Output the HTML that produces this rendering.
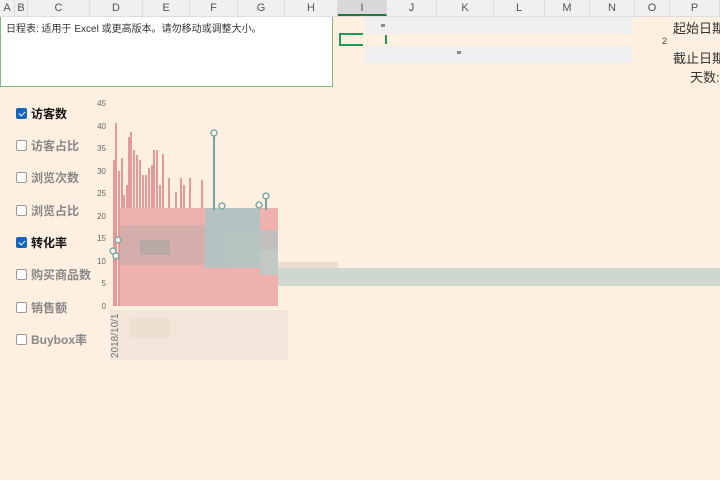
<!DOCTYPE html>
<html><head><meta charset="utf-8"><style>
*{margin:0;padding:0;box-sizing:border-box}
body{width:720px;height:480px;overflow:hidden;background:#fdf0e0;font-family:"Liberation Sans","Noto Sans CJK SC",sans-serif;position:relative}
.hdr{position:absolute;top:0;left:0;width:720px;height:17px;background:#f0f0f0;border-bottom:1px solid #ddd}
.hdr span{position:absolute;top:0;height:16px;line-height:17px;font-size:11px;color:#555;text-align:center;border-right:1px solid #ddd}
.abs{position:absolute}
.cb{position:absolute;left:16px;font-size:12px;font-weight:bold;color:#888;line-height:14px}
.cb i{display:inline-block;width:11px;height:11px;border:1px solid #999;border-radius:2px;background:#fff;vertical-align:-1px;margin-right:4px;position:relative;font-style:normal}
.cb.on{color:#111}.cb.on i{background:#1565c0;border-color:#1565c0}
.cb.on i:after{content:"";position:absolute;left:3px;top:1px;width:3px;height:5px;border:solid #fff;border-width:0 1px 1px 0;transform:rotate(45deg)}
.yl{position:absolute;left:90px;width:16px;text-align:right;font-size:8px;color:#666}
</style></head><body>
<div class="hdr">
<span style="left:0;width:15px">A</span><span style="left:15px;width:13px">B</span><span style="left:28px;width:62px">C</span><span style="left:90px;width:53px">D</span><span style="left:143px;width:47px">E</span><span style="left:190px;width:48px">F</span><span style="left:238px;width:47px">G</span><span style="left:285px;width:53px">H</span><span style="left:338px;width:49px;background:#d8d8d8;border-bottom:2px solid #1e7a45">I</span><span style="left:387px;width:50px">J</span><span style="left:437px;width:57px">K</span><span style="left:494px;width:51px">L</span><span style="left:545px;width:45px">M</span><span style="left:590px;width:45px">N</span><span style="left:635px;width:35px">O</span><span style="left:670px;width:50px">P</span>
</div>
<div class="abs" style="left:0;top:17px;width:333px;height:70px;background:#fff;border:1px solid #7cbf7c;border-top:none"></div>
<div class="abs" style="left:6px;top:20px;font-size:10px;color:#333">日程表: 适用于 Excel 或更高版本。请勿移动或调整大小。</div>
<div class="abs" style="left:364px;top:17px;width:268px;height:17px;background:#efefef"></div>
<div class="abs" style="left:364px;top:46px;width:268px;height:17px;background:#efefef"></div>
<div class="abs" style="left:381px;top:24px;width:4px;height:3px;background:#888"></div>
<div class="abs" style="left:457px;top:51px;width:4px;height:3px;background:#888"></div>
<div class="abs" style="left:339px;top:33px;width:24px;height:13px;border:2px solid #1e9a55;border-right:none"></div>
<div class="abs" style="left:385px;top:35px;width:2px;height:9px;background:#1e9a55"></div>
<div class="abs" style="left:662px;top:36px;font-size:9px;color:#444">2</div>
<div class="abs" style="left:673px;top:18px;font-size:13px;color:#333;white-space:nowrap">起始日期</div>
<div class="abs" style="left:673px;top:48px;font-size:13px;color:#333;white-space:nowrap">截止日期</div>
<div class="abs" style="left:690px;top:67px;font-size:13px;color:#333;white-space:nowrap">天数:</div>

<div class="cb on" style="top:107px"><i></i>访客数</div>
<div class="cb" style="top:139px"><i></i>访客占比</div>
<div class="cb" style="top:171px"><i></i>浏览次数</div>
<div class="cb" style="top:204px"><i></i>浏览占比</div>
<div class="cb on" style="top:236px"><i></i>转化率</div>
<div class="cb" style="top:268px"><i></i>购买商品数</div>
<div class="cb" style="top:301px"><i></i>销售额</div>
<div class="cb" style="top:333px"><i></i>Buybox率</div>

<div class="yl" style="top:99px">45</div><div class="yl" style="top:122px">40</div><div class="yl" style="top:144px">35</div><div class="yl" style="top:167px">30</div><div class="yl" style="top:189px">25</div><div class="yl" style="top:212px">20</div><div class="yl" style="top:234px">15</div><div class="yl" style="top:257px">10</div><div class="yl" style="top:279px">5</div><div class="yl" style="top:302px">0</div>

<svg class="abs" style="left:0;top:0" width="720" height="480">
<g fill="#e59a9a">
<rect x="113" y="160" width="2" height="146"/><rect x="115" y="123" width="2" height="183"/><rect x="118" y="171" width="2" height="135"/><rect x="121" y="158" width="2" height="148"/><rect x="123" y="195" width="2" height="111"/><rect x="126" y="185" width="2" height="121"/><rect x="128" y="137" width="2" height="169"/><rect x="130" y="132" width="2" height="174"/><rect x="133" y="150" width="2" height="156"/><rect x="136" y="155" width="2" height="151"/><rect x="139" y="160" width="2" height="146"/><rect x="142" y="175" width="2" height="131"/><rect x="145" y="175" width="2" height="131"/><rect x="148" y="168" width="2" height="138"/><rect x="151" y="165" width="2" height="141"/><rect x="153" y="150" width="2" height="156"/><rect x="156" y="150" width="2" height="156"/><rect x="159" y="185" width="2" height="121"/><rect x="162" y="154" width="2" height="152"/><rect x="168" y="178" width="2" height="128"/><rect x="175" y="192" width="2" height="114"/><rect x="180" y="178" width="2" height="128"/><rect x="183" y="185" width="2" height="121"/><rect x="189" y="178" width="2" height="128"/><rect x="201" y="180" width="2" height="126"/>
</g>
<rect x="120" y="208" width="158" height="98" fill="#eeb1ad"/>
<rect x="120" y="225" width="90" height="40" fill="#c9aeab" opacity=".75"/>
<rect x="140" y="240" width="30" height="15" fill="#a8a5a2" opacity=".6"/>
<rect x="205" y="208" width="55" height="60" fill="#a9c7c6" opacity=".85"/>
<rect x="228" y="230" width="50" height="38" fill="#b7c4c2" opacity=".8"/>
<rect x="260" y="250" width="18" height="25" fill="#c2c8c4"/>
<rect x="278" y="268" width="442" height="18" fill="#cfd8cf"/>
<rect x="278" y="262" width="60" height="6" fill="#e8ddd0"/>
<rect x="110" y="310" width="178" height="50" fill="#f2e6da"/>
<rect x="130" y="318" width="40" height="20" fill="#ecdcd0" opacity=".7"/>
<g fill="none" stroke="#6fa3a8" stroke-width="2"><line x1="214" y1="133" x2="214" y2="210"/><line x1="266" y1="196" x2="266" y2="210"/></g>
<g fill="#fdf0e0" stroke="#6fa3a8" stroke-width="1.3"><circle cx="214" cy="133" r="3"/><circle cx="222" cy="206" r="3"/><circle cx="259" cy="205" r="3"/><circle cx="266" cy="196" r="3"/><circle cx="113" cy="251" r="3"/><circle cx="116" cy="256" r="3"/><circle cx="118" cy="240" r="3"/></g>
<text transform="translate(118,358) rotate(-90)" font-size="10" fill="#777" font-family="Liberation Sans">2018/10/1</text>
</svg>
</body></html>
